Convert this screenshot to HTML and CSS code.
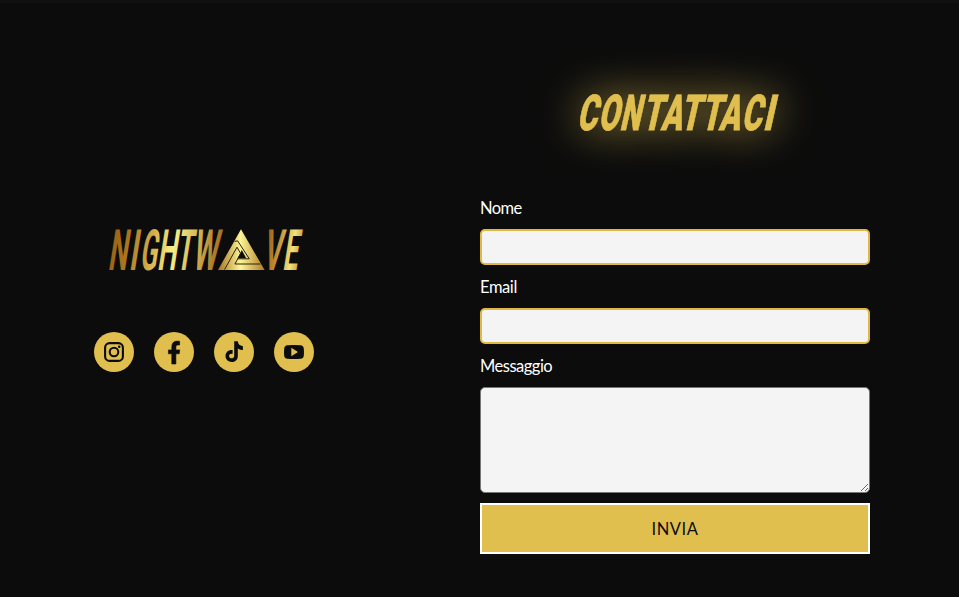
FILE: index.html
```html
<!DOCTYPE html>
<html lang="it">
<head>
<meta charset="utf-8">
<title>Nightwave – Contattaci</title>
<link rel="stylesheet" href="styles.css">
</head>
<body>
<main class="contact">
  <section class="brand">
    <svg class="logo" viewBox="0 0 210 60" role="img" aria-label="Nightwave">
      <defs>
        <linearGradient id="gold" gradientUnits="userSpaceOnUse" x1="9" y1="0" x2="203" y2="0">
          <stop offset="0" stop-color="#9c6416"/>
          <stop offset=".07" stop-color="#a9741f"/>
          <stop offset=".2" stop-color="#d2ae48"/>
          <stop offset=".31" stop-color="#f7ee88"/>
          <stop offset=".42" stop-color="#d8ba57"/>
          <stop offset=".54" stop-color="#a9772a"/>
          <stop offset=".58" stop-color="#a16a1c"/>
          <stop offset=".8" stop-color="#a16a1c"/>
          <stop offset=".84" stop-color="#b8852c"/>
          <stop offset=".93" stop-color="#f0e27a"/>
          <stop offset="1" stop-color="#ae7b26"/>
        </linearGradient>
        <linearGradient id="tri" x1="0" y1="0" x2="1" y2="0">
          <stop offset="0" stop-color="#a9721f"/>
          <stop offset=".48" stop-color="#fcf596"/>
          <stop offset="1" stop-color="#b07b25"/>
        </linearGradient>
      </defs>
      <g class="logo-text" fill="url(#gold)">
        <g transform="translate(0 49.7) skewX(-9)">
          <text textLength="19" lengthAdjust="spacingAndGlyphs" x="7.5">N</text>
          <text textLength="8.5" lengthAdjust="spacingAndGlyphs" x="28.4">I</text>
          <text textLength="17" lengthAdjust="spacingAndGlyphs" x="39.3">G</text>
          <text textLength="19" lengthAdjust="spacingAndGlyphs" x="56.7">H</text>
          <text textLength="16" lengthAdjust="spacingAndGlyphs" x="75.5">T</text>
          <text textLength="25" lengthAdjust="spacingAndGlyphs" x="92">W</text>
          <text textLength="18" lengthAdjust="spacingAndGlyphs" x="162.5">V</text>
          <text textLength="15" lengthAdjust="spacingAndGlyphs" x="182">E</text>
        </g>
      </g>
      <path fill="url(#tri)" d="M141 9.2 164.6 50H118z"/>
      <path class="tri-hole" d="M141.8 30 146.2 38.3H137.6z"/>
      <path class="tri-line" d="M124.5 49.6 137 27.2 140.6 33.5 134.9 44H160.5M134.6 21.5 137.6 20.8 149.3 38.8H137.6"/>
    </svg>
    <nav class="social">
      <a aria-label="Instagram"><svg viewBox="0 0 40 40"><rect class="line" x="11.1" y="11.1" width="17.8" height="17.8" rx="4.5"/><circle class="line" cx="20" cy="20" r="4.3"/><circle cx="25.2" cy="14.8" r="1.3"/></svg></a>
      <a aria-label="Facebook"><svg viewBox="0 0 40 40"><path d="M17.8 32V21.8H14.4V17.9H17.8V15Q17.8 9.3 23 9.1L25.6 9.3V13H23.6Q21.9 13 21.9 14.7V17.9H25.8L25.2 21.8H21.9V32z" stroke="#0c0c0c" stroke-width=".6"/></svg></a>
      <a aria-label="TikTok"><svg viewBox="0 0 40 40"><path d="M20.2 9.3H23.8Q24.2 13.6 28.9 14.2V18Q26 18 23.8 16.4V24.2C23.8 32 11.5 31.8 11.5 24C11.5 19.7 15 17.6 18.6 18V21.8C16.6 21.4 15.1 22.3 15.1 24C15.1 27.3 20.2 27 20.2 24z"/></svg></a>
      <a aria-label="YouTube"><svg viewBox="0 0 40 40"><path fill-rule="evenodd" d="M13.5 13.2Q20 12.6 26.5 13.2Q29.5 13.4 29.8 16.5Q30.2 20 29.8 23.7Q29.5 26.5 26.5 26.8Q20 27.4 13.5 26.8Q10.5 26.5 10.2 23.7Q9.8 20 10.2 16.5Q10.5 13.4 13.5 13.2zM17.3 15.8V24.2L24 20z"/></svg></a>
    </nav>
  </section>
  <section class="panel">
    <h2 class="title">
      <svg viewBox="0 0 240 60">
        <g transform="translate(0 47.7) skewX(-12.7)">
          <text textLength="20" lengthAdjust="spacingAndGlyphs" x="18.4">C</text>
          <text textLength="20.5" lengthAdjust="spacingAndGlyphs" x="39.7">O</text>
          <text textLength="20.5" lengthAdjust="spacingAndGlyphs" x="61.2">N</text>
          <text textLength="20.2" lengthAdjust="spacingAndGlyphs" x="83.6">T</text>
          <text textLength="21" lengthAdjust="spacingAndGlyphs" x="102.6">A</text>
          <text textLength="20.2" lengthAdjust="spacingAndGlyphs" x="121.5">T</text>
          <text textLength="20.2" lengthAdjust="spacingAndGlyphs" x="142.2">T</text>
          <text textLength="21" lengthAdjust="spacingAndGlyphs" x="160.6">A</text>
          <text textLength="20" lengthAdjust="spacingAndGlyphs" x="183">C</text>
          <text textLength="10.2" lengthAdjust="spacingAndGlyphs" x="204.5">I</text>
        </g>
      </svg>
    </h2>
    <form class="form">
      <label class="nome" for="nome">Nome</label>
      <input id="nome" type="text">
      <label class="email" for="email">Email</label>
      <input id="email" type="email">
      <label class="messaggio" for="messaggio">Messaggio</label>
      <textarea id="messaggio"></textarea>
      <button type="button">INVIA</button>
    </form>
  </section>
</main>
</body>
</html>
```
FILE: styles.css
```css
* { box-sizing: border-box; }
body {
  margin: 0;
  background: #0c0c0c;
  color: #fff;
  font-family: Lato, sans-serif;
}
.contact {
  display: grid;
  grid-template-columns: 408px 390px;
  column-gap: 72px;
  height: 597px;
  border-top: 3px solid #111;
  overflow: hidden;
}
.brand {
  display: flex;
  flex-direction: column;
  align-items: center;
  padding-top: 217px;
}
.logo {
  width: 210px;
  height: 60px;
  margin-left: 2px;
  overflow: visible;
}
.logo-text {
  font: 700 57px Roboto, sans-serif;
}
.tri-line {
  fill: none;
  stroke: #2b220e;
  stroke-width: 1;
}
.tri-hole { fill: #0c0c0c; }
.social {
  display: flex;
  gap: 20px;
  margin-top: 52px;
}
.social a {
  width: 40px;
  height: 40px;
  border-radius: 50%;
  background: #e0bf4f;
}
.social svg {
  display: block;
  fill: #0c0c0c;
}
.social .line {
  fill: none;
  stroke: #0c0c0c;
  stroke-width: 2.1;
}
.panel { padding-top: 79px; }
.title {
  width: 240px;
  height: 60px;
  margin: 0 0 54px 78px;
  filter: drop-shadow(0 0 21px rgba(224, 191, 79, .85));
}
.title svg {
  display: block;
  overflow: visible;
  fill: #e0bf4f;
  stroke: #e0bf4f;
  stroke-width: .8;
  font: 900 49.5px Roboto, sans-serif;
}
.form {
  display: flex;
  flex-direction: column;
}
label {
  height: 24px;
  margin-bottom: 9px;
  font-size: 16.5px;
  line-height: 24px;
  white-space: nowrap;
}
.nome { letter-spacing: -.6px; }
.email { letter-spacing: -.4px; }
.messaggio { letter-spacing: -.5px; }
input {
  height: 36px;
  margin: 0 0 10px;
  border: 2px solid #e0b945;
  border-radius: 5px;
  background: #f4f4f4;
}
textarea {
  height: 106px;
  margin: 0 0 10px;
  border: 1px solid #767676;
  border-radius: 5px;
  background: #f4f4f4;
  resize: vertical;
}
button {
  height: 51px;
  padding: 0;
  border: 2px solid #fff;
  background: #e0bf4f;
  color: #0c0c0c;
  font: 16.5px Lato, sans-serif;
  letter-spacing: .6px;
}
```
